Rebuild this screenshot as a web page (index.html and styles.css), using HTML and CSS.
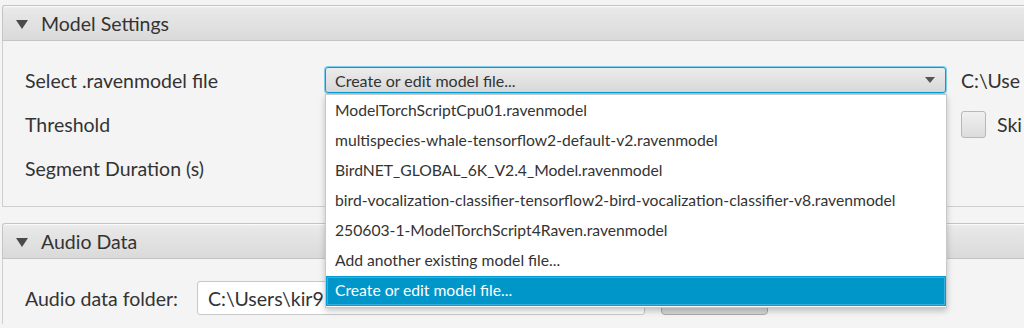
FILE: index.html
```html
<!DOCTYPE html>
<html lang="en">

<head>
  <meta charset="UTF-8">
  <title>Model Settings</title>
  <link rel="stylesheet" href="styles.css">
</head>

<body>
  <div class="pane">
    <div class="pane_title"><span class="arrow"></span>Model Settings</div>
    <div class="pane_body model_body">
      <div class="row">
        <div class="label">Select .ravenmodel file</div>
        <div class="combo_wrap">
          <div class="combo">
            <span>Create or edit model file...</span>
            <span class="combo_arrow"></span>
          </div>
          <ul class="popup">
            <li>ModelTorchScriptCpu01.ravenmodel</li>
            <li>multispecies-whale-tensorflow2-default-v2.ravenmodel</li>
            <li>BirdNET_GLOBAL_6K_V2.4_Model.ravenmodel</li>
            <li>bird-vocalization-classifier-tensorflow2-bird-vocalization-classifier-v8.ravenmodel</li>
            <li>250603-1-ModelTorchScript4Raven.ravenmodel</li>
            <li>Add another existing model file...</li>
            <li class="selected">Create or edit model file...</li>
          </ul>
        </div>
        <div class="path">C:\Use</div>
      </div>
      <div class="row">
        <div class="label">Threshold</div>
        <div class="spacer"></div>
        <div class="check"><span class="box"></span>Ski</div>
      </div>
      <div class="row">
        <div class="label">Segment Duration (s)</div>
      </div>
    </div>
  </div>

  <div class="pane last">
    <div class="pane_title"><span class="arrow"></span>Audio Data</div>
    <div class="pane_body audio_body">
      <div class="row">
        <div class="label short">Audio data folder:</div>
        <div class="field">C:\Users\kir9</div>
        <div class="button"></div>
      </div>
    </div>
  </div>
</body>

</html>
```

FILE: styles.css
```css
* {
  box-sizing: border-box;
}

html {
  overflow: hidden;
}

body {
  font-family: Lato, "Open Sans", sans-serif;
  font-size: 19.5px;
  color: #333;
  background-color: #f4f4f4;
  margin: 0;
  width: 1024px;
  height: 328px;
  padding-top: 5px;
  padding-left: 2px;
  overflow: hidden;
}

.pane {
  margin-bottom: 16px;
}

.pane.last {
  margin-bottom: 0;
}

.pane_title {
  height: 36px;
  display: flex;
  align-items: center;
  padding-left: 38px;
  position: relative;
  font-size: 19.5px;
  color: #333;
  border: 1px solid #c4c4c4;
  border-right: none;
  border-radius: 3px 0 0 0;
  background: linear-gradient(#f0f0f0, #e8e8e8 10%, #dadada);
  box-shadow: inset 0 1px 0 #fafafa;
}

.arrow {
  position: absolute;
  left: 13px;
  top: 14px;
  width: 0;
  height: 0;
  border-left: 6px solid transparent;
  border-right: 6px solid transparent;
  border-top: 9px solid #4a4a4a;
}

.pane_body {
  border-left: 1px solid #cfcfcf;
  border-bottom: 1px solid #cfcfcf;
  padding-left: 22px;
}

.model_body {
  height: 166px;
  padding-top: 26px;
}

.audio_body {
  height: 65px;
  padding-top: 22px;
  border-bottom: none;
}

.row {
  display: flex;
  align-items: center;
  height: 26px;
  margin-bottom: 18px;
}

.label {
  width: 300px;
  flex-shrink: 0;
  white-space: nowrap;
}

.label.short {
  width: 172px;
}

.combo_wrap {
  position: relative;
  width: 621px;
  flex-shrink: 0;
}

.combo {
  height: 26px;
  display: flex;
  align-items: center;
  justify-content: space-between;
  padding: 0 10px 0 9px;
  font-size: 16px;
  border: 1px solid #039ed3;
  box-shadow: 0 0 0 1px #7fcdeb;
  border-radius: 3px;
  background: linear-gradient(#ececec, #d8d8d8);
}

.combo_arrow {
  width: 0;
  height: 0;
  border-left: 5px solid transparent;
  border-right: 5px solid transparent;
  border-top: 6px solid #555;
}

.popup {
  position: absolute;
  left: 0;
  top: 27px;
  width: 622px;
  margin: 0;
  padding: 1px 0 1px 0;
  list-style: none;
  background: #fff;
  border: 1px solid #c8c8c8;
  box-shadow: 0 3px 6px rgba(0, 0, 0, .22);
  z-index: 2;
}

.popup li {
  height: 30px;
  line-height: 29px;
  padding-left: 9px;
  font-size: 15.7px;
  color: #333;
  white-space: nowrap;
}

.popup li.selected {
  background: #0096c9;
  color: #fff;
  box-shadow: inset 0 0 0 1px #039ed3, inset 0 0 0 2px #35b0dc;
}

.path {
  margin-left: 15px;
  white-space: nowrap;
}

.spacer {
  width: 636px;
  flex-shrink: 0;
}

.check {
  display: flex;
  align-items: center;
  white-space: nowrap;
}

.box {
  width: 25px;
  height: 27px;
  margin-right: 11px;
  border: 1px solid #b8b8b8;
  border-radius: 3px;
  background: linear-gradient(#f0f0f0, #dcdcdc);
}

.audio_body .row {
  height: 34px;
  margin-bottom: 0;
}

.field {
  width: 448px;
  height: 34px;
  flex-shrink: 0;
  display: flex;
  align-items: center;
  padding-left: 10px;
  border: 1px solid #c8c8c8;
  border-radius: 3px;
  background: #fff;
  white-space: nowrap;
  overflow: hidden;
}

.button {
  width: 107px;
  height: 34px;
  margin-left: 16px;
  border: 1px solid #aaa;
  border-radius: 4px;
  background: linear-gradient(#ececec, #d6d6d6);
}
```
